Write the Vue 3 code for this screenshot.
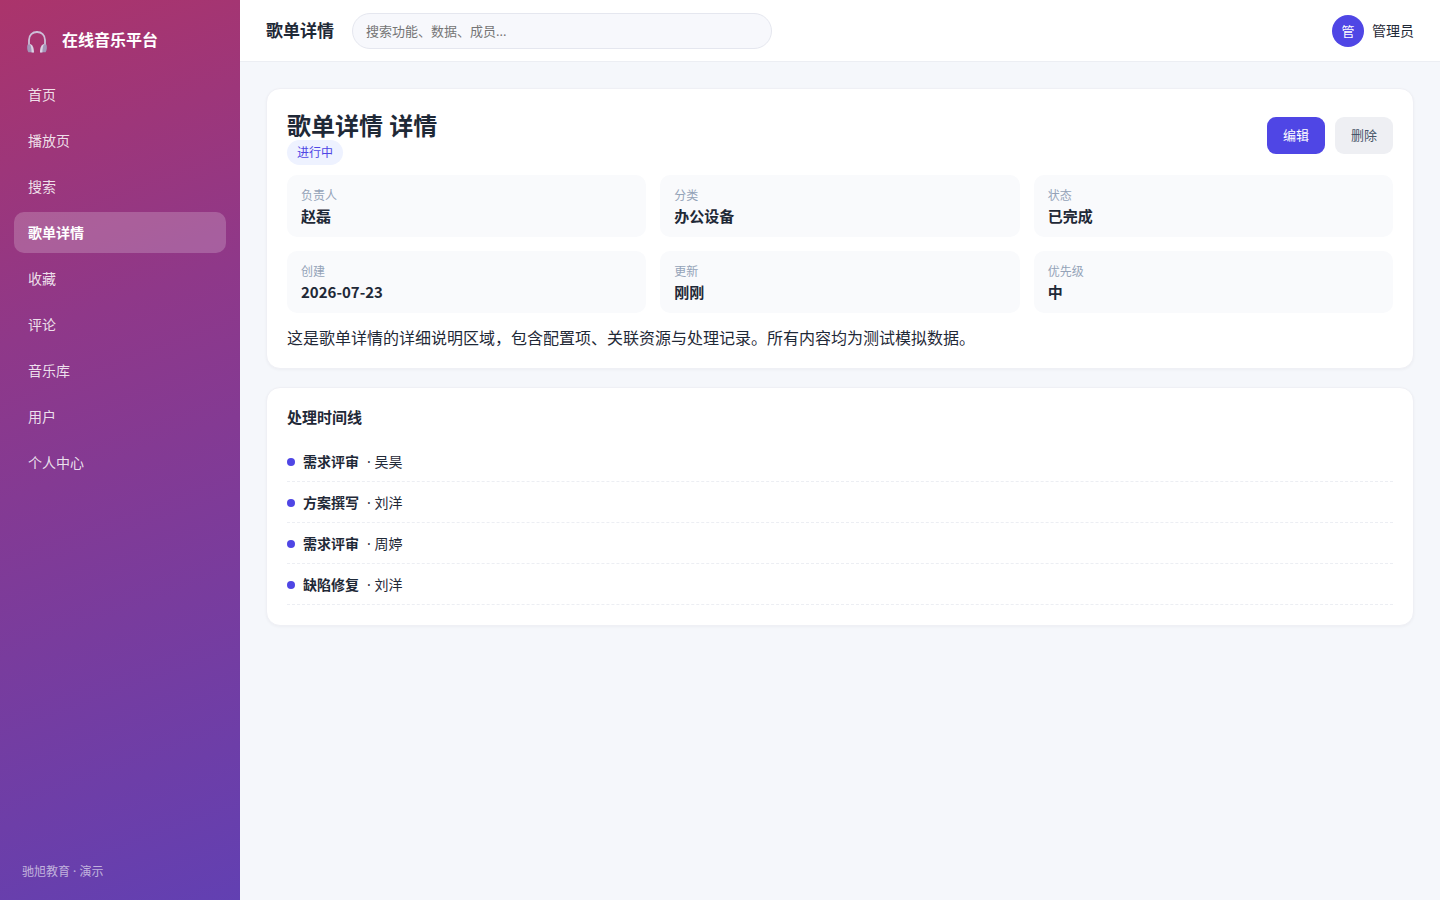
<script setup>
const menu = ['首页', '播放页', '搜索', '歌单详情', '收藏', '评论', '音乐库', '用户', '个人中心']
const current = '歌单详情'

const fields = [
  { label: '负责人', value: '赵磊' },
  { label: '分类', value: '办公设备' },
  { label: '状态', value: '已完成' },
  { label: '创建', value: '2026-07-23' },
  { label: '更新', value: '刚刚' },
  { label: '优先级', value: '中' },
]

const timeline = [
  { title: '需求评审', user: '吴昊' },
  { title: '方案撰写', user: '刘洋' },
  { title: '需求评审', user: '周婷' },
  { title: '缺陷修复', user: '刘洋' },
]
</script>

<template>
  <div class="layout">
    <aside class="sidebar">
      <div class="brand">
        <svg class="logo" viewBox="0 0 22 24" aria-hidden="true">
          <path d="M3 15V10C3 5 6.500 2 11 2s8 3 8 8v5" fill="none" stroke="#cdbfd8" stroke-width="1.8" />
          <path d="M10 1h2v1h-2z" fill="#cdbfd8" />
          <path d="M1.600 14.500h3.200l3 7.800H2.400C1 20.500.8 16.600 1.600 14.500z" fill="#a495b8" />
          <path d="M20.400 14.500h-3.200l-3 7.800h5.400c1.400-1.800 1.600-5.700.8-7.800z" fill="#a495b8" />
          <path d="M3.800 14c2.500 0 4.200 3.500 4.200 8.500H5.600C5.600 18.500 5 15.800 3.800 14z" fill="#dcd2e4" />
          <path d="M18.200 14c-2.500 0-4.200 3.500-4.200 8.500h2.400c0-4 .6-6.700 1.800-8.500z" fill="#dcd2e4" />
        </svg>
        <span>在线音乐平台</span>
      </div>
      <nav class="menu">
        <a v-for="item in menu" :key="item" href="#" :class="{ active: item === current }">{{ item }}</a>
      </nav>
      <div class="copyright">驰旭教育 · 演示</div>
    </aside>

    <div class="main">
      <header class="topbar">
        <h1>歌单详情</h1>
        <input class="search" type="search" aria-label="搜索" placeholder="搜索功能、数据、成员..." />
        <div class="user">
          <span class="avatar">管</span>
          <span>管理员</span>
        </div>
      </header>

      <main class="content">
        <section class="card">
          <div class="head">
            <div>
              <h2>歌单详情 详情</h2>
              <span class="badge">进行中</span>
            </div>
            <div class="actions">
              <button type="button" class="primary">编辑</button>
              <button type="button">删除</button>
            </div>
          </div>
          <dl class="fields">
            <div v-for="field in fields" :key="field.label" class="field">
              <dt>{{ field.label }}</dt>
              <dd>{{ field.value }}</dd>
            </div>
          </dl>
          <p class="description">这是歌单详情的详细说明区域，包含配置项、关联资源与处理记录。所有内容均为测试模拟数据。</p>
        </section>

        <section class="card">
          <h3>处理时间线</h3>
          <ul class="timeline">
            <li v-for="(entry, index) in timeline" :key="index">
              <span class="dot"></span>
              <strong>{{ entry.title }}</strong>
              <span>· {{ entry.user }}</span>
            </li>
          </ul>
        </section>
      </main>
    </div>
  </div>
</template>

<style>
body {
  margin: 0;
}
</style>

<style scoped>
* {
  box-sizing: border-box;
}

.layout {
  display: flex;
  min-height: 100vh;
  background: #f5f7fb;
  color: #1f2937;
  font-family: "Noto Sans", "Noto Sans CJK SC", sans-serif;
  font-size: 14px;
  line-height: 20px;
}

.sidebar {
  display: flex;
  flex: 0 0 240px;
  flex-direction: column;
  padding: 20px 14px;
  background: linear-gradient(160deg, #ab346b 0%, #8f3889 35%, #6240b2 100%);
  color: #fff;
}

.brand {
  display: flex;
  align-items: center;
  gap: 14px;
  height: 40px;
  margin-bottom: 14px;
  padding: 0 12px;
  font-size: 16px;
  font-weight: 700;
}

.logo {
  width: 22px;
  height: 24px;
  margin-top: 4px;
}

.menu {
  display: flex;
  flex-direction: column;
  gap: 5px;
}

.menu a {
  padding: 11px 14px 10px;
  border-radius: 10px;
  color: rgba(255, 255, 255, 0.85);
  text-decoration: none;
}

.menu a.active {
  background: rgba(255, 255, 255, 0.2);
  color: #fff;
  font-weight: 700;
}

.copyright {
  margin-top: auto;
  padding: 0 8px;
  color: rgba(255, 255, 255, 0.6);
  font-size: 12px;
  line-height: 16px;
}

.main {
  flex: 1;
  min-width: 0;
}

.topbar {
  display: flex;
  align-items: center;
  gap: 18px;
  height: 62px;
  padding: 0 26px;
  border-bottom: 1px solid #eceef3;
  background: #fff;
}

h1,
h2,
h3,
dl,
dd,
p,
ul {
  margin: 0;
  padding: 0;
}

h1 {
  font-size: 17px;
  line-height: 24px;
  white-space: nowrap;
}

.search {
  width: 420px;
  min-width: 0;
  height: 36px;
  padding: 0 13px;
  border: 1px solid #e5e7ef;
  border-radius: 18px;
  outline: none;
  background: #f7f8fc;
  color: inherit;
  font-family: inherit;
  font-size: 13px;
  appearance: none;
}

.search::placeholder {
  color: #757575;
}

.user {
  display: flex;
  align-items: center;
  gap: 8px;
  margin-left: auto;
  white-space: nowrap;
}

.avatar {
  width: 32px;
  height: 32px;
  border-radius: 50%;
  background: #4f46e5;
  color: #fff;
  font-size: 13px;
  line-height: 32px;
  text-align: center;
}

.content {
  display: flex;
  flex-direction: column;
  gap: 18px;
  padding: 26px;
}

.card {
  padding: 20px;
  border: 1px solid #eff0f5;
  border-radius: 14px;
  background: #fff;
  box-shadow: 0 1px 3px rgba(20, 20, 50, 0.04);
}

.head {
  display: flex;
  align-items: flex-start;
  justify-content: space-between;
  margin-bottom: 10px;
}

h2 {
  font-size: 24px;
  line-height: 34px;
}

.badge {
  display: block;
  width: fit-content;
  margin-top: -3px;
  padding: 3px 10px;
  border-radius: 13px;
  background: #eef2ff;
  color: #4f46e5;
  font-size: 12px;
  line-height: 19px;
}

.actions {
  display: flex;
  gap: 10px;
  padding-top: 8px;
}

button {
  padding: 8px 16px 9px;
  border: 0;
  border-radius: 9px;
  background: #eeeff3;
  color: #475569;
  font-family: inherit;
  font-size: 13px;
  line-height: 20px;
  cursor: pointer;
}

button.primary {
  background: #4f46e5;
  color: #fff;
}

.fields {
  display: grid;
  grid-template-columns: repeat(3, 1fr);
  gap: 14px;
}

.field {
  padding: 12px 14px 11px;
  border-radius: 10px;
  background: #f9fafc;
}

dt {
  color: #94a3b8;
  font-size: 12px;
  line-height: 18px;
}

dd {
  font-family: "Noto Sans CJK SC", sans-serif;
  font-size: 15px;
  font-weight: 700;
  line-height: 21px;
}

.description {
  margin-top: 15px;
  font-size: 16px;
  line-height: 20px;
}

h3 {
  margin-bottom: 15px;
  font-size: 15px;
  line-height: 18px;
}

.timeline {
  list-style: none;
}

.timeline li {
  display: flex;
  align-items: center;
  gap: 8px;
  padding: 11px 0 9px;
  border-bottom: 1px dashed #eceef3;
}

.dot {
  width: 8px;
  height: 8px;
  border-radius: 50%;
  background: #4f46e5;
}
</style>
